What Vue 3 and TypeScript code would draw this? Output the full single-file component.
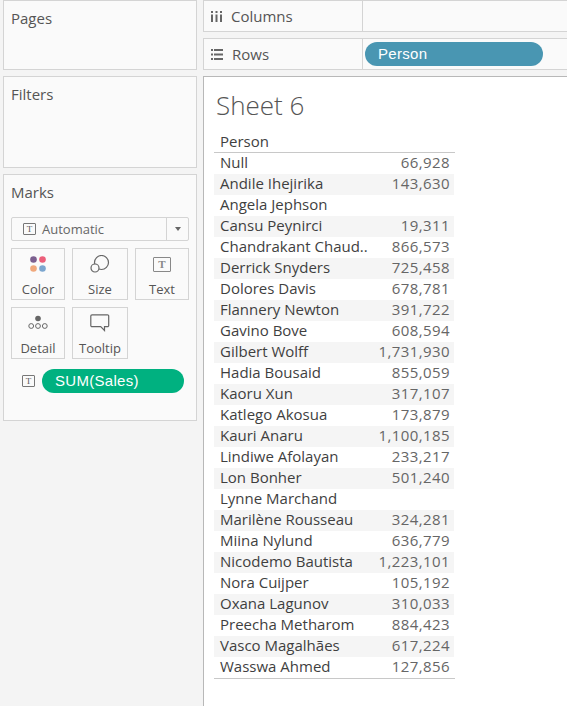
<script setup lang="ts">
const rows: [string, string][] = [
  ['Null', '66,928'], ['Andile Ihejirika', '143,630'], ['Angela Jephson', ''], ['Cansu Peynirci', '19,311'],
  ['Chandrakant Chaud..', '866,573'], ['Derrick Snyders', '725,458'], ['Dolores Davis', '678,781'],
  ['Flannery Newton', '391,722'], ['Gavino Bove', '608,594'], ['Gilbert Wolff', '1,731,930'],
  ['Hadia Bousaid', '855,059'], ['Kaoru Xun', '317,107'], ['Katlego Akosua', '173,879'],
  ['Kauri Anaru', '1,100,185'], ['Lindiwe Afolayan', '233,217'], ['Lon Bonher', '501,240'],
  ['Lynne Marchand', ''], ['Marilène Rousseau', '324,281'], ['Miina Nylund', '636,779'],
  ['Nicodemo Bautista', '1,223,101'], ['Nora Cuijper', '105,192'], ['Oxana Lagunov', '310,033'],
  ['Preecha Metharom', '884,423'], ['Vasco Magalhães', '617,224'], ['Wasswa Ahmed', '127,856'],
]
</script>

<template>
  <div class="app">
    <aside class="side">
      <section class="panel pages"><h3>Pages</h3></section>
      <section class="panel filters"><h3>Filters</h3></section>
      <section class="panel marks">
        <h3>Marks</h3>
        <div class="select">
          <span class="select-main">
            <span class="t-box"><span>T</span></span>
            Automatic
          </span>
          <span class="select-arrow"><i></i></span>
        </div>
        <div class="cards">
          <div class="card">
            <svg width="18" height="18" viewBox="0 0 18 18">
              <circle cx="4.500" cy="4.500" r="3.300" fill="#7b5f8f" />
              <circle cx="13.500" cy="4.500" r="3.300" fill="#ec5f7a" />
              <circle cx="4.500" cy="13.500" r="3.300" fill="#f0a87c" />
              <circle cx="13.500" cy="13.500" r="3.300" fill="#7ba6cf" />
            </svg>
            <span>Color</span>
          </div>
          <div class="card">
            <svg width="20" height="18" viewBox="0 0 20 18" fill="none" stroke="#666" stroke-width="1.200">
              <circle cx="11.500" cy="7.500" r="7" />
              <circle cx="5" cy="13" r="4" fill="#fafafa" />
            </svg>
            <span>Size</span>
          </div>
          <div class="card">
            <span class="t-box big"><span>T</span></span>
            <span>Text</span>
          </div>
          <div class="card">
            <svg width="20" height="18" viewBox="0 0 20 18" fill="none" stroke="#666" stroke-width="1">
              <circle cx="10" cy="4.500" r="2.800" fill="#666" stroke="none" />
              <circle cx="3.200" cy="12" r="2.400" />
              <circle cx="10" cy="12" r="2.400" />
              <circle cx="16.800" cy="12" r="2.400" />
            </svg>
            <span>Detail</span>
          </div>
          <div class="card">
            <svg width="20" height="18" viewBox="0 0 20 18" fill="none" stroke="#666" stroke-width="1.200">
              <path d="M2 .8h15.500a1.200 1.200 0 0 1 1.200 1.200v9.500a1.200 1.200 0 0 1-1.200 1.200H14.500v3.800l-3.800-3.800H2a1.200 1.200 0 0 1-1.200-1.200V2A1.200 1.200 0 0 1 2 .8z" />
            </svg>
            <span>Tooltip</span>
          </div>
        </div>
        <div class="field">
          <span class="t-box"><span>T</span></span>
          <div class="pill green">SUM(Sales)</div>
        </div>
      </section>
    </aside>

    <main class="main">
      <div class="shelf">
        <div class="shelf-label">
          <svg width="11" height="11" viewBox="0 0 11 11" fill="#666">
            <rect x="0" y="3.500" width="2" height="7.500" />
            <rect x="4.500" y="3.500" width="2" height="7.500" />
            <rect x="9" y="3.500" width="2" height="7.500" />
            <rect x="0" y="0" width="2" height="2" />
            <rect x="4.500" y="0" width="2" height="2" />
            <rect x="9" y="0" width="2" height="2" />
          </svg>
          <span>Columns</span>
        </div>
        <div class="shelf-body"></div>
      </div>
      <div class="shelf">
        <div class="shelf-label">
          <svg width="12" height="11" viewBox="0 0 12 11" fill="#666">
            <rect x="0" y="0" width="2" height="2" />
            <rect x="3" y="0" width="9" height="2" />
            <rect x="0" y="4.500" width="2" height="2" />
            <rect x="3" y="4.500" width="9" height="2" />
            <rect x="0" y="9" width="2" height="2" />
            <rect x="3" y="9" width="9" height="2" />
          </svg>
          <span>Rows</span>
        </div>
        <div class="shelf-body">
          <div class="pill blue">Person</div>
        </div>
      </div>

      <div class="sheet">
        <h1>Sheet 6</h1>
        <div class="table">
          <div class="head">Person</div>
          <div class="rows">
            <div v-for="r in rows" :key="r[0]" class="row">
              <span class="name">{{ r[0] }}</span>
              <span class="num">{{ r[1] }}</span>
            </div>
          </div>
        </div>
      </div>
    </main>
  </div>
</template>

<style>
html, body { margin: 0; background: #f4f4f4; }
</style>

<style scoped>
.app {
  width: 567px;
  height: 706px;
  display: flex;
  overflow: hidden;
  box-sizing: border-box;
  padding-left: 3px;
  gap: 6px;
  background: #f4f4f4;
  font-family: "Open Sans", "Noto Sans", sans-serif;
  color: #444;
}
.side { width: 194px; display: flex; flex-direction: column; gap: 6px; flex: none; }
.panel {
  box-sizing: border-box;
  background: #fafafa;
  border: 1px solid #d4d4d4;
  padding: 0 7px;
}
.panel h3 { margin: 0; font-size: 15px; font-weight: 400; color: #555; line-height: 20px; padding: 7px 0 1px; }
.pages { height: 70px; }
.filters { height: 92px; }
.marks { height: 247px; }
.select {
  margin-top: 14px;
  height: 24px;
  width: 178px;
  box-sizing: border-box;
  border: 1px solid #d4d4d4;
  border-radius: 2px;
  display: flex;
  font-size: 13px;
  color: #666;
}
.select-main { flex: 1; display: flex; align-items: center; gap: 6px; padding-left: 11px; border-right: 1px solid #d4d4d4; }
.select-arrow { width: 21px; display: flex; align-items: center; justify-content: center; }
.select-arrow i { width: 0; height: 0; border-left: 3.500px solid transparent; border-right: 3.500px solid transparent; border-top: 4px solid #666; }
.t-box {
  box-sizing: border-box;
  width: 13px;
  height: 12px;
  border: 1px solid #777;
  border-radius: 1px;
  display: inline-flex;
  align-items: center;
  justify-content: center;
  flex: none;
}
.t-box span { font-family: "Liberation Serif", serif; font-size: 9px; line-height: 1; color: #555; }
.t-box.big { width: 18px; height: 15px; border: 1.500px solid #888; margin-bottom: 1px; }
.t-box.big span { font-size: 11px; font-weight: 700; color: #888; }
.cards {
  margin-top: 7px;
  display: grid;
  grid-template-columns: 54px 56px 54px;
  grid-auto-rows: 52px;
  gap: 7px;
  width: 178px;
}
.card {
  box-sizing: border-box;
  border: 1px solid #d4d4d4;
  display: flex;
  flex-direction: column;
  align-items: center;
  justify-content: flex-end;
  gap: 7px;
  padding-bottom: 1px;
  font-size: 13px;
  color: #555;
  line-height: 18px;
}
.field { margin-top: 10px; display: flex; align-items: center; gap: 7px; padding-left: 11px; }
.pill {
  box-sizing: border-box;
  height: 24px;
  border-radius: 12px;
  color: #fff;
  font-family: "Liberation Sans", Arial, sans-serif;
  font-size: 15px;
  letter-spacing: 0.3px;
  line-height: 24px;
  padding-left: 13px;
}
.green { background: #00b180; width: 142px; }
.blue { background: #4996b2; width: 178px; }

.main { flex: 1; min-width: 0; display: flex; flex-direction: column; gap: 6px; }
.shelf {
  box-sizing: border-box;
  height: 32px;
  background: #fafafa;
  border: 1px solid #d4d4d4;
  border-right: none;
  display: flex;
}
.shelf-label {
  box-sizing: border-box;
  width: 159px;
  border-right: 1px solid #d4d4d4;
  display: flex;
  align-items: center;
  gap: 9px;
  padding-left: 7px;
  font-size: 15px;
  color: #555;
}
.shelf-body { flex: 1; display: flex; align-items: center; padding-left: 2px; }
.sheet {
  flex: 1;
  background: #fff;
  border-top: 1px solid #b8b8b8;
  border-left: 1px solid #b8b8b8;
  padding: 0 0 0 10px;
}
h1 { margin: 0; padding: 9px 0 0 2px; height: 43px; box-sizing: border-box; font-size: 26px; line-height: 38px; font-weight: 300; color: #555; }
.table { width: 241px; margin-top: 11px; }
.head {
  height: 22px;
  box-sizing: border-box;
  border-bottom: 1px solid #c8c8c8;
  padding-left: 6px;
  font-size: 15px;
  line-height: 20px;
  color: #3f3f3f;
}
.rows { border-bottom: 1px solid #c8c8c8; }
.row {
  height: 21px;
  display: flex;
  justify-content: space-between;
  width: 240px;
  box-sizing: border-box;
  padding: 0 4px 0 6px;
  font-size: 15px;
  line-height: 18px;
}
.row:nth-child(even) { background: #f5f5f5; }
.name { color: #3f3f3f; }
.num { color: #666; line-height: 19px; letter-spacing: 0.4px; }
</style>
